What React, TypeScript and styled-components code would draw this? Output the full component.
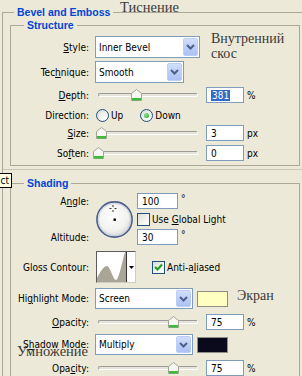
import styled, { createGlobalStyle } from "styled-components";

const GlobalStyle = createGlobalStyle`
  html, body {
    margin: 0;
    padding: 0;
    background: #ece9d8;
    overflow: hidden;
  }
  body {
    font-family: "DejaVu Sans Condensed", "Liberation Sans", sans-serif;
    font-size: 10px;
    color: #000;
  }
`;

const Page = styled.div`
  position: relative;
  width: 302px;
  height: 376px;
  overflow: hidden;
  padding-top: 6px;
  box-sizing: border-box;
`;

const Group = styled.fieldset<{ $w: number; $ml: number; $pad: string }>`
  margin: 0 0 0 ${(p) => p.$ml}px;
  padding: ${(p) => p.$pad};
  width: ${(p) => p.$w}px;
  min-width: 0;
  box-sizing: border-box;
  border: 1px solid #aca899;
`;

const Legend = styled.legend<{ $ml: number }>`
  margin-left: ${(p) => p.$ml}px;
  padding: 0 3px;
  font-family: "Liberation Sans", sans-serif;
  font-weight: bold;
  font-size: 10.5px;
  line-height: 13px;
  color: #0046d5;
`;

const Separator = styled.div`
  height: 1px;
  margin: 3px 0 7px -7px;
  background: #c9c7b9;
`;

const Row = styled.div<{ $h: number; $mt: number }>`
  display: flex;
  align-items: center;
  height: ${(p) => p.$h}px;
  margin-top: ${(p) => p.$mt}px;
  white-space: nowrap;
`;

const Label = styled.span`
  width: 78px;
  flex-shrink: 0;
  margin-right: 6px;
  text-align: right;
  white-space: nowrap;
`;

const Select = styled.div<{ $w: number }>`
  width: ${(p) => p.$w}px;
  height: 100%;
  box-sizing: border-box;
  border: 1px solid #7f9db9;
  background: #fff;
  display: flex;
  align-items: center;
  padding: 1px 1px 1px 3px;
`;

const SelectText = styled.span`
  flex: 1;
`;

const DropButton = styled.span`
  width: 15px;
  height: 100%;
  box-sizing: border-box;
  border: 1px solid #bccdf8;
  border-radius: 2px;
  background: linear-gradient(180deg, #d2defd 0%, #b9cbf7 60%, #adc2f4 100%);
  display: flex;
  align-items: center;
  justify-content: center;
`;

const Field = styled.div<{ $w: number; $ml: number }>`
  width: ${(p) => p.$w}px;
  height: 16px;
  margin-left: ${(p) => p.$ml}px;
  box-sizing: border-box;
  border: 1px solid #7f9db9;
  background: #fff;
  padding-left: 4px;
  display: flex;
  align-items: center;
`;

const Picked = styled.span`
  background: #316ac5;
  color: #fff;
  padding: 0 1px;
`;

const Unit = styled.span<{ $top?: boolean }>`
  margin-left: 3px;
  align-self: ${(p) => (p.$top ? "flex-start" : "center")};
`;

const Slider = styled.div`
  position: relative;
  width: 108px;
  height: 12px;
  box-sizing: border-box;
  padding: 0 5px 0 3px;
  display: flex;
  align-items: center;
`;

const Track = styled.div`
  flex: 1;
  height: 4px;
  box-sizing: border-box;
  border: 1px solid;
  border-color: #9d9c99 #fff #fff #9d9c99;
  border-radius: 2px;
  background: #e6e4da;
`;

const Thumb = styled.svg`
  position: absolute;
  top: 0;
`;

const Radio = styled.span<{ $on?: boolean; $ml: number }>`
  width: 13px;
  height: 13px;
  margin-left: ${(p) => p.$ml}px;
  margin-right: 2px;
  box-sizing: border-box;
  border-radius: 50%;
  border: 1px solid #1c5180;
  background: radial-gradient(circle at 70% 70%, #fff 0%, #f1f1ec 45%, #d2d2ca 100%);
  display: flex;
  align-items: center;
  justify-content: center;
  &::after {
    content: "";
    display: ${(p) => (p.$on ? "block" : "none")};
    width: 5px;
    height: 5px;
    border-radius: 50%;
    background: radial-gradient(circle at 35% 35%, #8be88a, #21a121);
  }
`;

const Check = styled.span<{ $ml: number }>`
  width: 13px;
  height: 13px;
  margin-left: ${(p) => p.$ml}px;
  margin-right: 2px;
  box-sizing: border-box;
  border: 1px solid #1c5180;
  background: linear-gradient(135deg, #dcdcd5 0%, #f4f4f0 60%, #fff 100%);
  display: flex;
  align-items: center;
  justify-content: center;
  flex-shrink: 0;
`;

const AngleGrid = styled.div`
  display: grid;
  grid-template-columns: 78px 37px auto;
  grid-template-rows: 16px 20px 16px;
  column-gap: 0;
  margin-top: 3px;
  white-space: nowrap;
  & > .c {
    display: flex;
    align-items: center;
  }
`;

const AngleLabel = styled.span<{ $row: number }>`
  grid-column: 1;
  grid-row: ${(p) => p.$row};
  align-self: center;
  text-align: right;
`;

const Dial = styled.svg`
  grid-column: 2;
  grid-row: 1 / span 3;
  align-self: center;
  margin-left: 6px;
`;

const AngleCell = styled.div<{ $row: number }>`
  grid-column: 3;
  grid-row: ${(p) => p.$row};
  display: flex;
  align-items: center;
  padding-left: 11px;
`;

const Contour = styled.div`
  width: 40px;
  height: 100%;
  margin-left: 1px;
  box-sizing: border-box;
  border: 1px solid;
  border-color: #5c5c5c #cfcdc2 #cfcdc2 #5c5c5c;
  background: #fff;
  display: flex;
`;

const ContourArrow = styled.span`
  flex: 1;
  border-left: 1px solid #333;
  display: flex;
  align-items: center;
  justify-content: center;
`;

const Swatch = styled.span<{ $c: string }>`
  width: 31px;
  height: 16px;
  margin-left: 4px;
  box-sizing: border-box;
  border: 1px solid #8f8f8a;
  background: ${(p) => p.$c};
`;

const Note = styled.span<{ $ml: number; $mt: number }>`
  margin-left: ${(p) => p.$ml}px;
  margin-top: ${(p) => p.$mt}px;
  align-self: flex-start;
  font-family: "Liberation Serif", serif;
  font-size: 14px;
  line-height: 15px;
  color: #3a3a3a;
  white-space: pre;
`;

const Overlay = styled.span<{ $x: number; $y: number }>`
  position: absolute;
  left: ${(p) => p.$x}px;
  top: ${(p) => p.$y}px;
  font-family: "Liberation Serif", serif;
  font-size: 14.5px;
  line-height: 15px;
  color: #3a3a3a;
  white-space: nowrap;
`;

const Tip = styled.div`
  position: absolute;
  left: 0;
  top: 173px;
  width: 12px;
  height: 15px;
  box-sizing: border-box;
  border: 1px solid #000;
  border-left: none;
  background: #ffffe1;
  font-size: 10px;
  line-height: 13px;
  text-align: right;
  padding-right: 2px;
`;

const Chevron = () => (
  <svg width="9" height="6" viewBox="0 0 9 6">
    <polyline points="1,1 4.5,4.5 8,1" fill="none" stroke="#4d6185" strokeWidth="2" />
  </svg>
);

const DropDown = ({ w, text }: { w: number; text: string }) => (
  <Select $w={w}>
    <SelectText>{text}</SelectText>
    <DropButton>
      <Chevron />
    </DropButton>
  </Select>
);

const SlideBar = ({ pct }: { pct: number }) => (
  <Slider>
    <Track />
    <Thumb width="11" height="12" viewBox="0 0 11 12" style={{ left: 3 + pct - 5 }}>
      <path d="M0.5,4.5 L5.5,0.5 L10.5,4.5 L10.5,11.5 L0.5,11.5 Z" fill="#f6f6f2" stroke="#a3a394" />
      <rect x="1" y="9" width="9" height="2.5" fill="#3dbb3d" />
    </Thumb>
  </Slider>
);

const Tick = () => (
  <svg width="9" height="9" viewBox="0 0 9 9">
    <polyline points="1,4 3.5,6.5 8,1.5" fill="none" stroke="#21a121" strokeWidth="2.2" />
  </svg>
);

export default function App() {
  return (
    <>
      <GlobalStyle />
      <Page>
        <Group $w={320} $ml={2} $pad="0 0 0 7px">
          <Legend $ml={4}>Bevel and Emboss</Legend>

          <Group $w={290} $ml={0} $pad="4px 0 4px 0">
            <Legend $ml={13}>Structure</Legend>
            <Row $h={22} $mt={0}>
              <Label>
                <u>S</u>tyle:
              </Label>
              <DropDown w={105} text="Inner Bevel" />
              <Note $ml={11} $mt={-5}>{"Внутренний\nскос"}</Note>
            </Row>
            <Row $h={22} $mt={3}>
              <Label>
                Tec<u>h</u>nique:
              </Label>
              <DropDown w={89} text="Smooth" />
            </Row>
            <Row $h={16} $mt={4}>
              <Label>
                <u>D</u>epth:
              </Label>
              <SlideBar pct={38} />
              <Field $w={38} $ml={3}>
                <Picked>381</Picked>
              </Field>
              <Unit>%</Unit>
            </Row>
            <Row $h={16} $mt={4}>
              <Label>Direction:</Label>
              <Radio $ml={1} />
              <span>Up</span>
              <Radio $ml={17} $on />
              <span>Down</span>
            </Row>
            <Row $h={16} $mt={2}>
              <Label>
                <u>S</u>ize:
              </Label>
              <SlideBar pct={3} />
              <Field $w={38} $ml={3}>3</Field>
              <Unit>px</Unit>
            </Row>
            <Row $h={16} $mt={4}>
              <Label>
                So<u>f</u>ten:
              </Label>
              <SlideBar pct={0} />
              <Field $w={38} $ml={3}>0</Field>
              <Unit>px</Unit>
            </Row>
          </Group>

          <Separator />

          <Group $w={290} $ml={0} $pad="0 0 20px 0">
            <Legend $ml={13}>Shading</Legend>
            <AngleGrid>
              <AngleLabel $row={1}>
                A<u>n</u>gle:
              </AngleLabel>
              <Dial width="39" height="39" viewBox="0 0 39 39">
                <defs>
                  <radialGradient id="dialFill" cx="45%" cy="40%" r="65%">
                    <stop offset="0%" stopColor="#ffffff" />
                    <stop offset="65%" stopColor="#f1f1ee" />
                    <stop offset="100%" stopColor="#cfcfca" />
                  </radialGradient>
                </defs>
                <circle cx="19.5" cy="19.5" r="17.6" fill="url(#dialFill)" stroke="#4a5f8c" strokeWidth="1.6" />
                <circle cx="19.5" cy="19.5" r="16.2" fill="none" stroke="#c6ccdc" strokeWidth="1" />
                <g stroke="#333" strokeWidth="1">
                  <line x1="18" y1="5" x2="18" y2="7" />
                  <line x1="18" y1="10" x2="18" y2="12" />
                  <line x1="14.5" y1="8.5" x2="16.5" y2="8.5" />
                  <line x1="19.5" y1="8.5" x2="21.5" y2="8.5" />
                </g>
                <rect x="18.5" y="18.5" width="2.4" height="2.4" fill="#000" />
              </Dial>
              <AngleCell $row={1}>
                <Field $w={41} $ml={0}>100</Field>
                <Unit $top>°</Unit>
              </AngleCell>
              <AngleCell $row={2}>
                <Check $ml={0} />
                <span>
                  Use <u>G</u>lobal Light
                </span>
              </AngleCell>
              <AngleLabel $row={3}>Altitude:</AngleLabel>
              <AngleCell $row={3}>
                <Field $w={41} $ml={0}>30</Field>
                <Unit $top>°</Unit>
              </AngleCell>
            </AngleGrid>

            <Row $h={32} $mt={6}>
              <Label>Gloss Contour:</Label>
              <Contour>
                <svg width="29" height="30" viewBox="0 0 29 30">
                  <path
                    d="M0,30 L0,26 C3,21 6,14 10,14 C13,14 16,28 19,28 C22,27 25,10 28,0 L29,0 L29,30 Z"
                    fill="#a9a698"
                  />
                </svg>
                <ContourArrow>
                  <svg width="5" height="3" viewBox="0 0 5 3">
                    <path d="M0,0 L5,0 L2.5,3 Z" fill="#000" />
                  </svg>
                </ContourArrow>
              </Contour>
              <Check $ml={16}>
                <Tick />
              </Check>
              <span>
                Anti-a<u>l</u>iased
              </span>
            </Row>

            <Row $h={21} $mt={5}>
              <Label>
                Hi<u>g</u>hlight Mode:
              </Label>
              <DropDown w={98} text="Screen" />
              <Swatch $c="#ffffc2" />
              <Note $ml={9} $mt={0}>Экран</Note>
            </Row>
            <Row $h={16} $mt={5}>
              <Label>
                <u>O</u>pacity:
              </Label>
              <SlideBar pct={75} />
              <Field $w={38} $ml={3}>75</Field>
              <Unit>%</Unit>
            </Row>
            <Row $h={21} $mt={4}>
              <Label>
                S<u>h</u>adow Mode:
              </Label>
              <DropDown w={98} text="Multiply" />
              <Swatch $c="#0a0a1c" />
            </Row>
            <Row $h={16} $mt={5}>
              <Label>
                Opa<u>c</u>ity:
              </Label>
              <SlideBar pct={75} />
              <Field $w={38} $ml={3}>75</Field>
              <Unit>%</Unit>
            </Row>
          </Group>
        </Group>

        <Overlay $x={120} $y={0}>Тиснение</Overlay>
        <Overlay $x={17} $y={344}>Умножение</Overlay>
        <Tip>ct</Tip>
      </Page>
    </>
  );
}
